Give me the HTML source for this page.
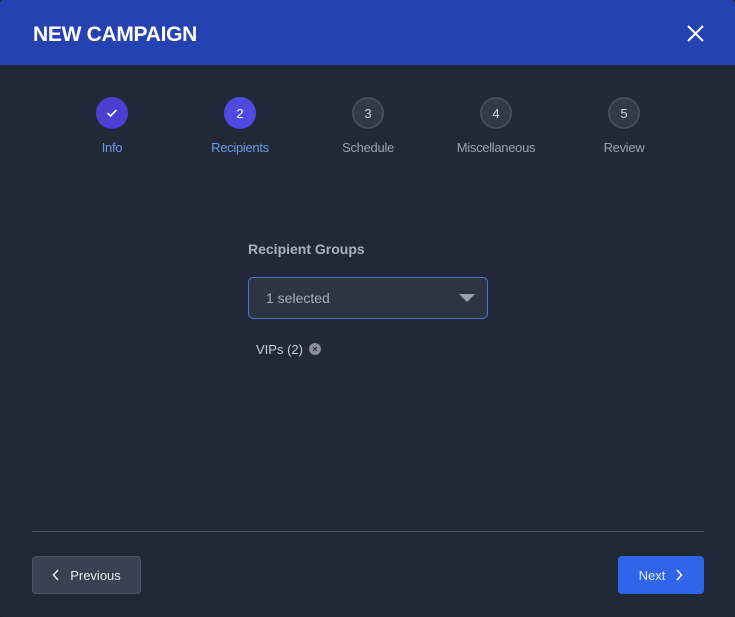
<!DOCTYPE html>
<html><head><meta charset="utf-8"><style>
*{margin:0;padding:0;box-sizing:border-box}
body{width:735px;height:617px;background:#1c2230;font-family:"Liberation Sans",sans-serif;overflow:hidden;position:relative}
.modal{position:absolute;left:0;top:0;width:735px;height:617px;background:#212938;border-radius:4px;overflow:hidden}
.hdr{position:absolute;left:0;top:0;width:735px;height:65px;background:#2642b0}
.title{position:absolute;left:33px;top:23px;color:#fff;font-weight:bold;font-size:21px;letter-spacing:-0.3px}
.step{position:absolute;top:97px;width:120px;margin-left:-60px;text-align:center}
.c{width:32px;height:32px;border-radius:50%;margin:0 auto;display:flex;align-items:center;justify-content:center;font-size:13px;color:#cfd4dc}
.l{margin-top:11px;font-size:13px;color:#9aa2ae;letter-spacing:-0.3px}
.sep{position:absolute;left:32px;top:531px;width:672px;height:1px;background:#4a5263}
.btn{position:absolute;top:556px;height:38px;border-radius:4px;font-size:13px;color:#e6e9ee;display:flex;align-items:center;justify-content:center;gap:10px}
</style></head><body><div class="modal">
<div class="hdr"><div class="title">NEW CAMPAIGN</div>
<svg style="position:absolute;left:687px;top:25px" width="17" height="17" viewBox="0 0 17 17"><path d="M1 1L16 16M16 1L1 16" stroke="#fff" stroke-width="2"/></svg></div>
<div class="step" style="left:112px"><div class="c" style="background:#4a3fd0"><svg width="12" height="10" viewBox="0 0 12 10"><path d="M1.5 5L4.5 8L10.5 2" stroke="#fff" stroke-width="1.6" fill="none"/></svg></div><div class="l" style="color:#6f9ae0">Info</div></div>
<div class="step" style="left:240px"><div class="c" style="background:#5048e0;color:#fff">2</div><div class="l" style="color:#6f9ae0">Recipients</div></div>
<div class="step" style="left:368px"><div class="c" style="background:#323a4a;border:2px solid #454d5c">3</div><div class="l">Schedule</div></div>
<div class="step" style="left:496px"><div class="c" style="background:#323a4a;border:2px solid #454d5c">4</div><div class="l">Miscellaneous</div></div>
<div class="step" style="left:624px"><div class="c" style="background:#323a4a;border:2px solid #454d5c">5</div><div class="l">Review</div></div>
<div style="position:absolute;left:248px;top:241px;font-size:14px;font-weight:bold;color:#aab1bc">Recipient Groups</div>
<div style="position:absolute;left:248px;top:277px;width:240px;height:42px;border:1px solid #5570c8;border-radius:5px;background:#2d3443">
<span style="position:absolute;left:17px;top:12px;font-size:14px;color:#a7aeb9">1 selected</span>
<svg style="position:absolute;left:210px;top:16px" width="16" height="9"><path d="M0 0H16L8 8Z" fill="#9aa0aa"/></svg></div>
<div style="position:absolute;left:256px;top:342px;font-size:13px;color:#c8cdd5">VIPs (2)</div>
<div style="position:absolute;left:309px;top:343px;width:12px;height:12px;border-radius:50%;background:#8a8f98;color:#2a303c;font-size:9px;font-weight:bold;line-height:12px;text-align:center">×</div>
<div class="sep"></div>
<div class="btn" style="left:32px;width:109px;background:#394252;border:1px solid #4b5364"><svg width="8" height="12"><path d="M6 1L1.5 6L6 11" stroke="#e6e9ee" stroke-width="1.5" fill="none"/></svg>Previous</div>
<div class="btn" style="left:618px;width:86px;background:#3065ea">Next<svg width="8" height="12"><path d="M2 1L6.5 6L2 11" stroke="#fff" stroke-width="1.5" fill="none"/></svg></div>
</div></body></html>
